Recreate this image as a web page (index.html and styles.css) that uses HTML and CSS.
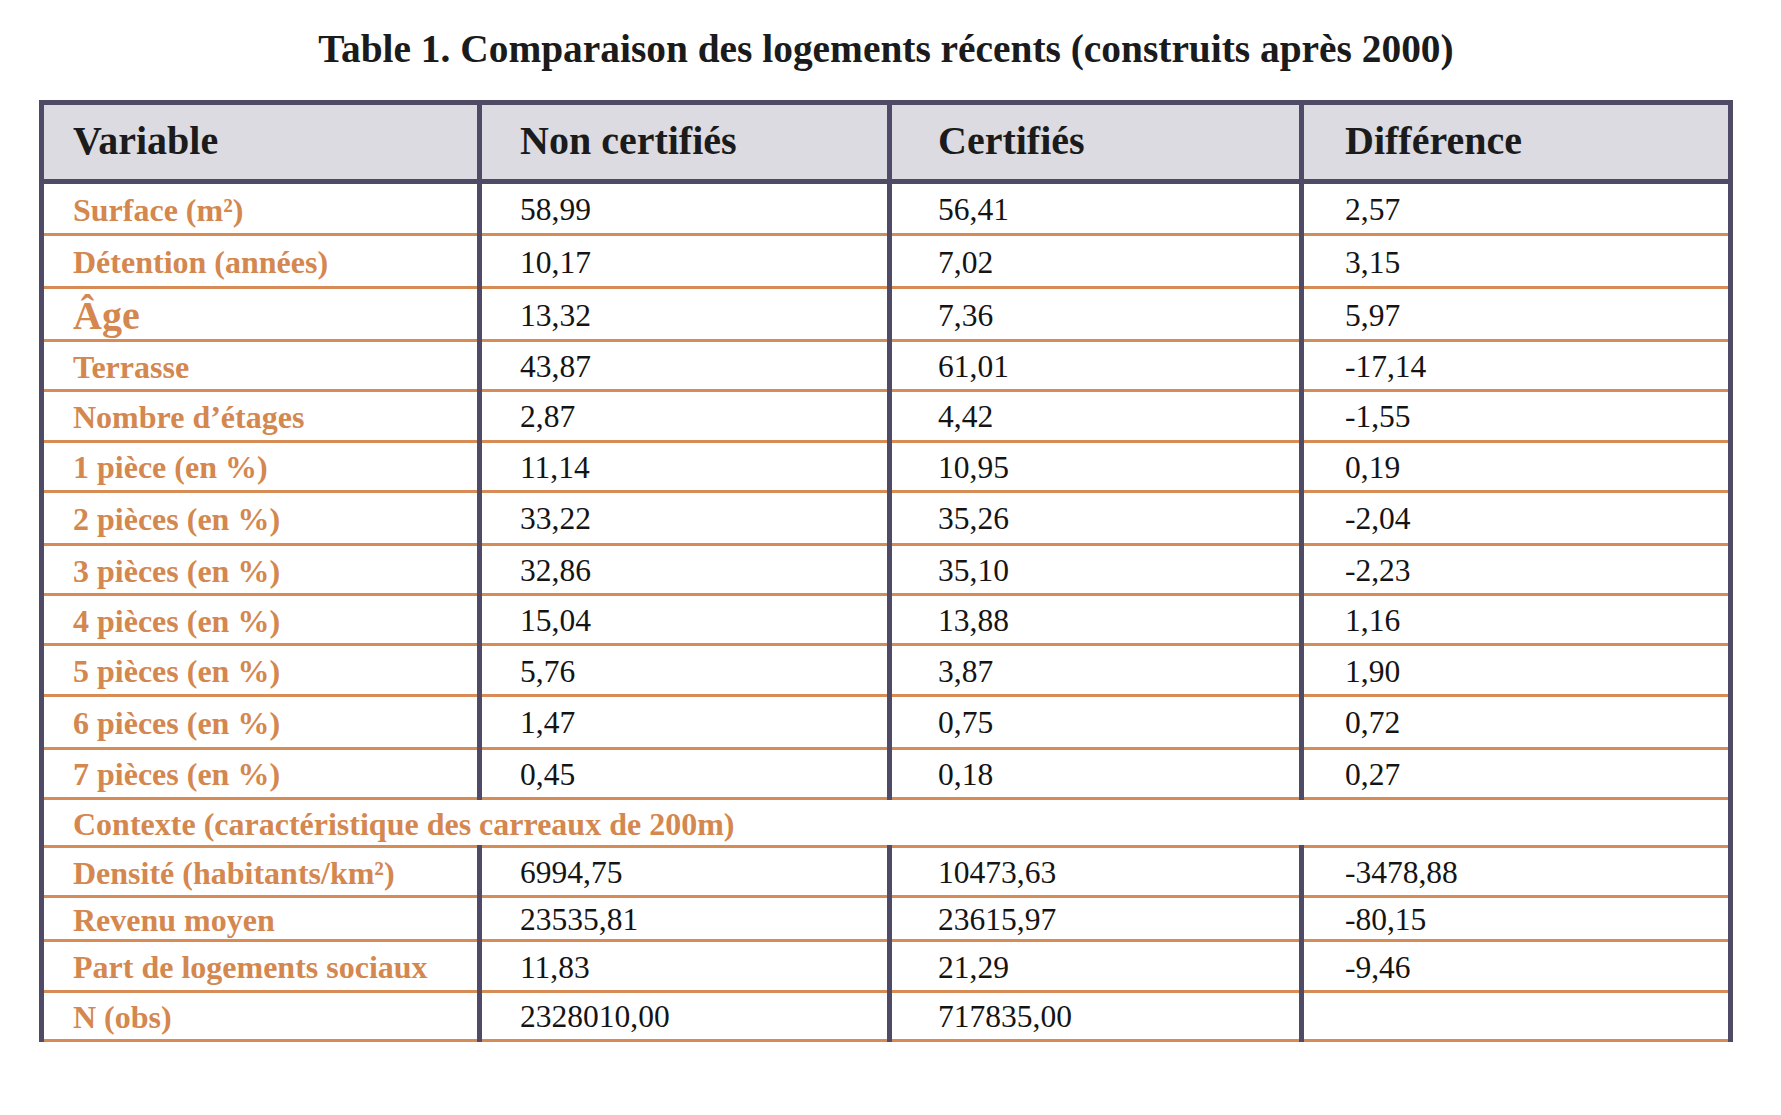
FILE: index.html
```html
<!DOCTYPE html>
<html lang="fr">
<head>
<meta charset="utf-8">
<title>Table 1</title>
<link rel="stylesheet" href="styles.css">
</head>
<body>
<div class="page">
  <h1 class="title">Table 1. Comparaison des logements récents (construits après 2000)</h1>
  <table class="data">
    <colgroup>
      <col class="c1"><col class="c2"><col class="c3"><col class="c4">
    </colgroup>
    <thead>
      <tr>
        <th class="p1">Variable</th>
        <th class="p2">Non certifiés</th>
        <th class="p3">Certifiés</th>
        <th class="p4">Différence</th>
      </tr>
    </thead>
    <tbody>
      <tr class="first"><td class="lab">Surface (m²)</td><td class="p2">58,99</td><td class="p3">56,41</td><td class="p4">2,57</td></tr>
      <tr class="tall"><td class="lab">Détention (années)</td><td class="p2">10,17</td><td class="p3">7,02</td><td class="p4">3,15</td></tr>
      <tr><td class="lab big">Âge</td><td class="p2">13,32</td><td class="p3">7,36</td><td class="p4">5,97</td></tr>
      <tr><td class="lab">Terrasse</td><td class="p2">43,87</td><td class="p3">61,01</td><td class="p4">-17,14</td></tr>
      <tr><td class="lab">Nombre d’étages</td><td class="p2">2,87</td><td class="p3">4,42</td><td class="p4">-1,55</td></tr>
      <tr><td class="lab">1 pièce (en %)</td><td class="p2">11,14</td><td class="p3">10,95</td><td class="p4">0,19</td></tr>
      <tr class="tall"><td class="lab">2 pièces (en %)</td><td class="p2">33,22</td><td class="p3">35,26</td><td class="p4">-2,04</td></tr>
      <tr><td class="lab">3 pièces (en %)</td><td class="p2">32,86</td><td class="p3">35,10</td><td class="p4">-2,23</td></tr>
      <tr><td class="lab">4 pièces (en %)</td><td class="p2">15,04</td><td class="p3">13,88</td><td class="p4">1,16</td></tr>
      <tr><td class="lab">5 pièces (en %)</td><td class="p2">5,76</td><td class="p3">3,87</td><td class="p4">1,90</td></tr>
      <tr class="tall"><td class="lab">6 pièces (en %)</td><td class="p2">1,47</td><td class="p3">0,75</td><td class="p4">0,72</td></tr>
      <tr><td class="lab">7 pièces (en %)</td><td class="p2">0,45</td><td class="p3">0,18</td><td class="p4">0,27</td></tr>
      <tr class="ctx"><td class="lab" colspan="4">Contexte (caractéristique des carreaux de 200m)</td></tr>
      <tr><td class="lab">Densité (habitants/km²)</td><td class="p2">6994,75</td><td class="p3">10473,63</td><td class="p4">-3478,88</td></tr>
      <tr class="short"><td class="lab">Revenu moyen</td><td class="p2">23535,81</td><td class="p3">23615,97</td><td class="p4">-80,15</td></tr>
      <tr><td class="lab">Part de logements sociaux</td><td class="p2">11,83</td><td class="p3">21,29</td><td class="p4">-9,46</td></tr>
      <tr class="last"><td class="lab">N (obs)</td><td class="p2">2328010,00</td><td class="p3">717835,00</td><td class="p4"></td></tr>
    </tbody>
  </table>
</div>
</body>
</html>
```

FILE: styles.css
```css
html, body {
  margin: 0;
  padding: 0;
  background: #ffffff;
}

.page {
  width: 1694px;
  margin-left: 39px;
  padding-top: 27px;
  font-family: "Liberation Serif", "Times New Roman", serif;
}

.title {
  margin: 0 0 28px 0;
  text-align: center;
  font-size: 39.4px;
  font-weight: bold;
  line-height: 45px;
  color: #1b1b1b;
}

.data {
  width: 1694px;
  table-layout: fixed;
  border-collapse: collapse;
  border-left: 5px solid #4f4b66;
  border-right: 5px solid #4f4b66;
  border-bottom: 3px solid #d78b55;
}

.c1 { width: 438px; }
.c2 { width: 410px; }
.c3 { width: 412px; }
.c4 { width: 429px; }

.data th {
  height: 70px;
  padding: 0 0 4px 0;
  background: #dcdbe1;
  border: 5px solid #4f4b66;
  text-align: left;
  vertical-align: middle;
  font-size: 40px;
  font-weight: bold;
  color: #1b1b1b;
  white-space: nowrap;
}

.data td {
  height: 50.3px;
  box-sizing: border-box;
  padding: 3px 0 0 0;
  border-left: 5px solid #4f4b66;
  border-right: 5px solid #4f4b66;
  border-bottom: 3px solid #d78b55;
  vertical-align: middle;
  font-size: 31.5px;
  color: #141414;
  white-space: nowrap;
}

.data .p1,
.data .lab { padding-left: 29px; }
.data .p2 { padding-left: 38px; }
.data .p3 { padding-left: 46px; }
.data .p4 { padding-left: 41px; }

.data td.lab {
  font-size: 32px;
  font-weight: bold;
  color: #d4874f;
}

.data td.big { font-size: 40px; }

.data tr.first td { height: 53px; }
.data tr.tall td { height: 53px; }
.data tr.ctx td { height: 48px; }
.data tr.short td { height: 44px; }
.data tr.last td { height: 49px; }
```
